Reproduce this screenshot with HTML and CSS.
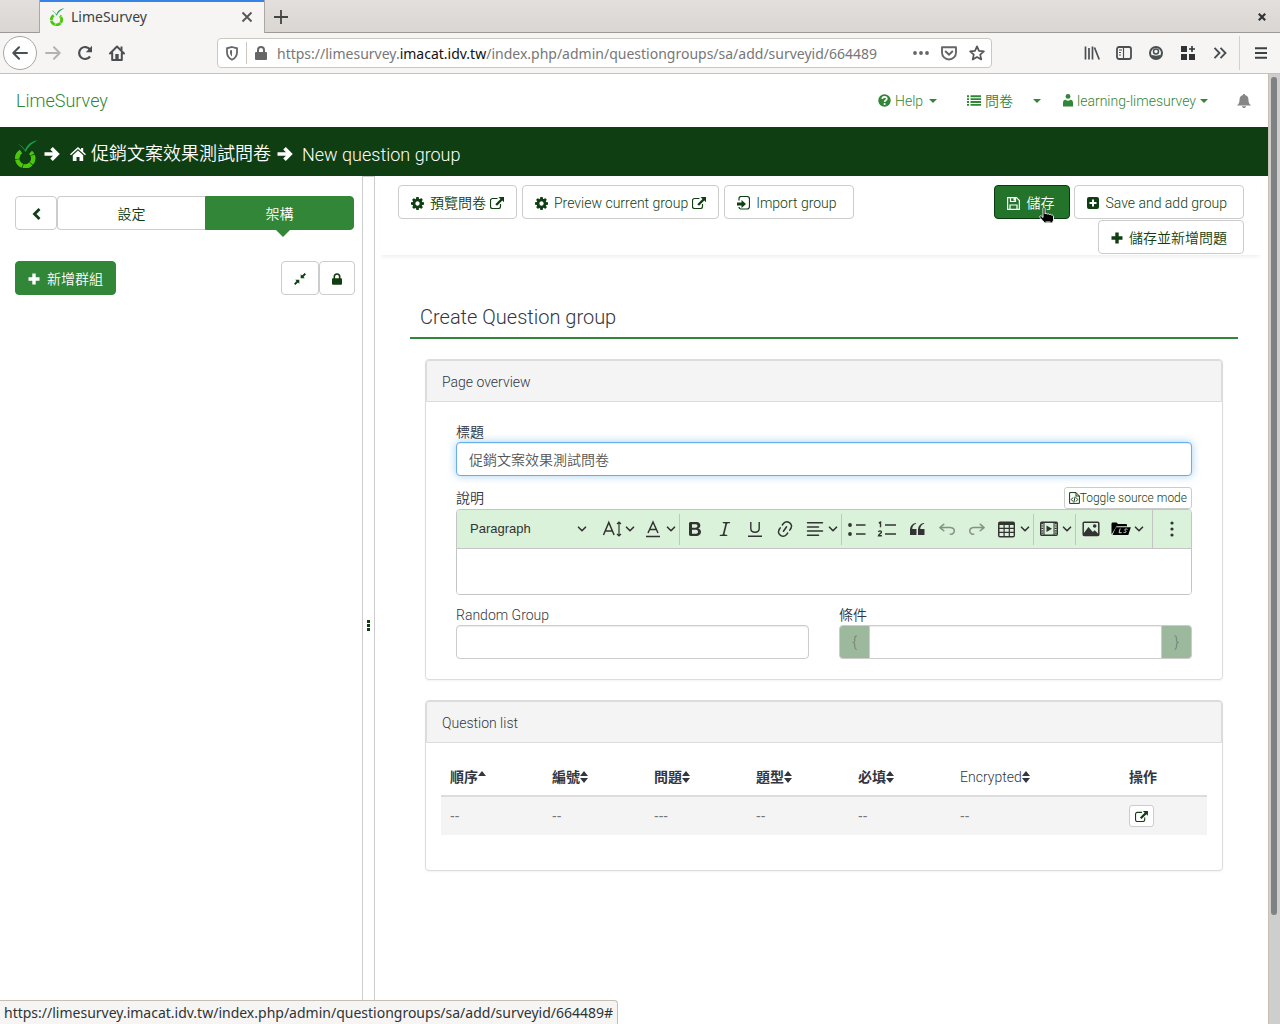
FILE: index.html
```html
<!DOCTYPE html>
<html lang="zh-Hant-TW">
<head>
<meta charset="utf-8">
<meta name="viewport" content="width=device-width, initial-scale=1">
<title>LimeSurvey</title>
<link rel="stylesheet" href="styles.css">
</head>
<body>
<svg class="sprite" aria-hidden="true">
  <symbol id="lime" viewBox="0 0 24 28">
    <path d="M7 11.500a8 8 0 1 0 9.500.8" fill="none" stroke="#4bc80a" stroke-width="4.400" stroke-dasharray="8.500 .700"/>
    <path d="M4 4c3 1 5 3 7 6 2-5 6-9 12.500-9.500C18 3 14 7 11.500 12 9 8 7 6 4 4z" fill="#12a04a"/>
  </symbol>
  <symbol id="caret" viewBox="0 0 8 4"><path d="M0 0h8L4 4z" fill="currentColor"/></symbol>
  <symbol id="arrow" viewBox="0 0 16 16"><path d="M.5 8h12M7.500 2.300L13.200 8l-5.700 5.700" fill="none" stroke="currentColor" stroke-width="3.600"/></symbol>
  <symbol id="home" viewBox="0 0 16 14"><path d="M8 0l3 2.700V1h2.200v3.700L16 7.300l-1 1L8 2 1 8.300l-1-1z" fill="currentColor"/><path d="M8 3.500l5.200 4.700V14H9.500v-4h-3v4H2.800V8.200z" fill="currentColor"/></symbol>
  <symbol id="cog" viewBox="128 128 1536 1536"><path fill="currentColor" d="M1152 896q0-106-75-181t-181-75-181 75-75 181 75 181 181 75 181-75 75-181zm512-109v222q0 12-8 23t-20 13l-185 28q-19 54-39 91 35 50 107 138 10 12 10 25t-9 23q-27 37-99 108t-94 71q-12 0-26-9l-138-108q-44 23-91 38-16 136-29 186-7 28-36 28h-222q-14 0-24.500-8.500t-11.500-21.500l-28-184q-49-16-90-37l-141 107q-10 9-25 9-14 0-25-11-126-114-165-168-7-10-7-23 0-12 8-23 15-21 51-66.500t54-70.500q-27-50-41-99l-183-27q-13-2-21-12.500t-8-23.500v-222q0-12 8-23t19-13l186-28q14-46 39-92-40-57-107-138-10-12-10-24 0-10 9-23 26-36 98.500-107.500t94.500-71.500q13 0 26 10l138 107q44-23 91-38 16-136 29-186 7-28 36-28h222q14 0 24.500 8.500t11.500 21.500l28 184q49 16 90 37l142-107q9-9 24-9 13 0 25 10 129 119 165 170 7 8 7 22 0 12-8 23-15 21-51 66.500t-54 70.500q26 50 41 98l183 28q13 2 21 12.500t8 23.500z"/></symbol>
  <symbol id="external" viewBox="0 0 14 12"><path d="M7.500 1.500H2.500a2 2 0 0 0-2 2v6a2 2 0 0 0 2 2H8.500a2 2 0 0 0 2-2V7" fill="none" stroke="currentColor" stroke-width="1.200"/><path d="M8.500 0H14v5.200l-1.700-1.600L7 8.800 5.300 7.200l5.200-5.300z" fill="currentColor"/></symbol>
  <symbol id="import" viewBox="0 0 13 14"><path d="M2 4.500V2.500a2 2 0 0 1 2-2h6a2.500 2.500 0 0 1 2.500 2.500v7.500a2.500 2.500 0 0 1-2.500 2.500H4a2 2 0 0 1-2-2" fill="none" stroke="currentColor" stroke-width="1.200"/><path d="M0 6.500h4.500V4L9 8l-4.500 4V9.500H0z" fill="currentColor"/></symbol>
  <symbol id="plus" viewBox="0 0 12 12"><path d="M4.300.5h3.400v3.800h3.800v3.400H7.700v3.800H4.300V7.700H.5V4.300h3.800z" fill="currentColor"/></symbol>
  <symbol id="plus-square" viewBox="0 0 12 12"><path fill-rule="evenodd" d="M2 0h8a2 2 0 0 1 2 2v8a2 2 0 0 1-2 2H2a2 2 0 0 1-2-2V2a2 2 0 0 1 2-2zm3 2.500V5H2.500v2H5v2.500h2V7h2.500V5H7V2.500z" fill="currentColor"/></symbol>
  <symbol id="floppy" viewBox="0 0 13 13"><path d="M.6.6H9.500l2.900 2.900v8.900H.6zM3.500.6v3.900h5V.6M3 12V8h7v4" fill="none" stroke="currentColor" stroke-width="1.200"/><path d="M6.500.6h2v3h-2z" fill="currentColor"/></symbol>
  <symbol id="lock" viewBox="0 0 10 12"><path d="M2.300 6V3.700a2.700 2.700 0 0 1 5.400 0V6" fill="none" stroke="currentColor" stroke-width="1.600"/><rect y="5.200" width="10" height="6.500" rx="1" fill="currentColor"/></symbol>
  <symbol id="compress" viewBox="0 0 12 12"><path d="M6.700 5.300V1.200L8 2.500 10.700 0l1.300 1.300-2.500 2.700 1.300 1.300zM5.300 6.700v4.100L4 9.500 1.300 12 0 10.700 2.500 8 1.200 6.700z" fill="currentColor"/></symbol>
  <symbol id="sort" viewBox="0 0 8 12"><path d="M0 5l4-5 4 5zM0 7h8l-4 5z" fill="currentColor"/></symbol>
  <symbol id="sort-up" viewBox="0 0 8 12"><path d="M0 5l4-5 4 5z" fill="currentColor"/></symbol>
  <symbol id="chev" viewBox="0 0 10 10"><path d="M1.500 3.200L5 6.700l3.500-3.500" fill="none" stroke="currentColor" stroke-width="1.600" stroke-linecap="round" stroke-linejoin="round"/></symbol>
</svg>

<div class="browser">
  <div class="tabbar">
    <div class="tab">
      <svg width="16" height="18"><use href="#lime"/></svg>
      <span class="tab-title">LimeSurvey</span>
      <button class="plain" aria-label="Close tab"><svg width="12" height="12" viewBox="0 0 12 12"><path d="M1.500 1.500l9 9m0-9l-9 9" stroke="#555" stroke-width="1.800"/></svg></button>
    </div>
    <button class="plain new-tab" aria-label="New tab"><svg width="14" height="14" viewBox="0 0 14 14"><path d="M7 0v14M0 7h14" stroke="#444" stroke-width="1.800"/></svg></button>
    <button class="plain close-window" aria-label="Close window"><svg width="8" height="8" viewBox="0 0 8 8"><path d="M.8.8l6.400 6.400m0-6.400L.8 7.200" stroke="#2e3436" stroke-width="2.200"/></svg></button>
  </div>
  <div class="urlrow">
    <div class="nav-buttons">
      <button class="plain back" aria-label="Back"><svg width="16" height="14" viewBox="0 0 16 14"><path d="M15 7H1.500M7 1.200L1.300 7 7 12.800" fill="none" stroke="#4a4f52" stroke-width="2" stroke-linecap="round" stroke-linejoin="round"/></svg></button>
      <button class="plain" aria-label="Forward"><svg width="16" height="14" viewBox="0 0 16 14"><path d="M1 7h13.500M9 1.200L14.700 7 9 12.800" fill="none" stroke="#b5b3b1" stroke-width="2" stroke-linecap="round" stroke-linejoin="round"/></svg></button>
      <button class="plain" aria-label="Reload"><svg width="16" height="16" viewBox="0 0 16 16"><path d="M13 4.500A6 6 0 1 0 13 11.500" fill="none" stroke="#4a4f52" stroke-width="2.200"/><path d="M15 .8v6.400H8.800z" fill="#4a4f52"/></svg></button>
      <button class="plain" aria-label="Home"><svg width="16" height="16" viewBox="0 0 16 16"><path d="M1 8.500l7-7 7 7M3.200 8v7h9.600V8" fill="none" stroke="#4a4f52" stroke-width="2" stroke-linejoin="round" stroke-linecap="round"/><path d="M6.300 9h3.400v6H6.300z" fill="#4a4f52"/><path d="M11.500 1.500h2V5h-2z" fill="#4a4f52"/></svg></button>
    </div>
    <div class="address">
      <svg width="12" height="15" viewBox="0 0 12 15"><path d="M6 1l5 1.300v4c0 3.600-1.800 6-5 7.500-3.200-1.500-5-3.900-5-7.500v-4z" fill="none" stroke="#666" stroke-width="1.800"/><path d="M6 4v6.500C4.500 9 4 8 4 6V4.500z" fill="#666"/></svg>
      <span class="address-rule"></span>
      <svg width="12" height="14" viewBox="0 0 12 14"><path d="M3 7V4a3 3 0 0 1 6 0v3" fill="none" stroke="#666" stroke-width="2"/><rect y="6" width="12" height="8" rx="1" fill="#666"/></svg>
      <span class="url">https://limesurvey.<b>imacat.idv.tw</b>/index.php/admin/questiongroups/sa/add/surveyid/664489</span>
      <svg width="16" height="4" viewBox="0 0 16 4"><circle cx="2" cy="2" r="1.900" fill="#666"/><circle cx="8" cy="2" r="1.900" fill="#666"/><circle cx="14" cy="2" r="1.900" fill="#666"/></svg>
      <svg width="16" height="15" viewBox="0 0 16 15"><path d="M1 1.200h14v5.300a7 7 0 0 1-14 0z" fill="none" stroke="#666" stroke-width="1.900" stroke-linejoin="round"/><path d="M4.700 5.500L8 8.700l3.300-3.200" fill="none" stroke="#666" stroke-width="2" stroke-linecap="round"/></svg>
      <svg width="16" height="16" viewBox="0 0 16 16"><path d="M8 1.300l2 4.500 4.900.5-3.700 3.300 1.100 4.900L8 12l-4.300 2.500 1.100-4.900L1.100 6.300 6 5.800z" fill="none" stroke="#555" stroke-width="1.700" stroke-linejoin="round"/></svg>
    </div>
    <div class="tools">
      <svg width="16" height="16" viewBox="0 0 16 16"><path d="M1.500 1.500v13M5 3v11.500M8.500 1.500v13M10.500 2.500l4.700 12" fill="none" stroke="#4a4f52" stroke-width="1.700"/></svg>
      <svg width="16" height="14" viewBox="0 0 16 14"><rect x="1" y="1" width="14" height="12" rx="2" fill="none" stroke="#4a4f52" stroke-width="1.800"/><path d="M7.500 1v12M3 4h3M3 6.500h2M3 9h2" stroke="#4a4f52" stroke-width="1.200"/></svg>
      <svg width="16" height="14" viewBox="0 0 14 14"><circle cx="7" cy="7" r="6" fill="none" stroke="#4a4f52" stroke-width="2"/><circle cx="7" cy="5.500" r="2.500" fill="none" stroke="#4a4f52" stroke-width="1.500"/><path d="M2 8.500c2.500 1.500 7.500 1.500 10 0l-2 4H4z" fill="#4a4f52"/></svg>
      <svg width="16" height="14" viewBox="0 0 14 14"><path d="M0 0h6v6H0zM0 8h6v6H0zM8 8h6v6H8zM10.200 0h1.600v2.200H14v1.600h-2.200V6h-1.600V3.800H8V2.200h2.200z" fill="#2f3335"/></svg>
      <svg width="16" height="12" viewBox="0 0 13 12"><path d="M1 .8L6 6l-5 5.200M7 .8L12 6l-5 5.200" fill="none" stroke="#4a4f52" stroke-width="1.900"/></svg>
    </div>
    <button class="plain menu" aria-label="Menu"><svg width="12" height="12" viewBox="0 0 12 12"><path d="M0 1.200h12M0 6h12M0 10.800h12" stroke="#3c4143" stroke-width="1.900"/></svg></button>
  </div>

  <div class="viewport">
    <div class="page">
      <header class="topnav">
        <a class="brand" href="#">LimeSurvey</a>
        <nav class="links">
          <a href="#"><svg width="13" height="13" viewBox="0 0 13 13"><circle cx="6.500" cy="6.500" r="6.200" fill="currentColor"/><path d="M4.300 5c0-3 4.500-2.800 4.500-.3 0 1.600-2.200 1.600-2.200 3.300M6.600 9v2" fill="none" stroke="#fff" stroke-width="1.700"/></svg>Help<svg class="caret" width="8" height="4"><use href="#caret"/></svg></a>
          <a href="#" class="surveys zh"><svg width="14" height="11" viewBox="0 0 14 11"><path d="M0 1.200h2M0 4.100h2M0 7h2M0 9.900h2M3.500 1.200H14M3.500 4.100H14M3.500 7H14M3.500 9.900H14" stroke="currentColor" stroke-width="1.900"/></svg>問卷</a>
          <a href="#" class="surveys-more" aria-label="More"><svg width="8" height="4"><use href="#caret"/></svg></a>
          <a href="#" class="user"><svg width="10" height="13" viewBox="0 0 10 13"><circle cx="5" cy="2.400" r="2.400" fill="currentColor"/><path d="M0 12.500V9c0-2 1-3.200 2.500-3.200a4 4 0 0 0 5 0C9 5.800 10 7 10 9v3.500z" fill="currentColor"/></svg>learning-limesurvey<svg width="8" height="4"><use href="#caret"/></svg></a>
          <a href="#" class="bell" aria-label="Notifications"><svg width="14" height="14" viewBox="0 0 14 14"><path d="M7 0c.8 0 1 .5 1 1 2.500.6 3.500 2.300 3.500 5 0 2.500.8 4 2.500 5.500H0C1.700 10 2.500 8.500 2.500 6c0-2.700 1-4.400 3.500-5 0-.5.200-1 1-1zM5 12.200h4c0 2.400-4 2.400-4 0z" fill="currentColor"/></svg></a>
        </nav>
      </header>

      <div class="crumbs">
        <svg width="24" height="28"><use href="#lime"/></svg>
        <svg width="16" height="16"><use href="#arrow"/></svg>
        <a href="#" class="survey-link zh"><svg width="16" height="14"><use href="#home"/></svg>促銷文案效果測試問卷</a>
        <svg width="16" height="16"><use href="#arrow"/></svg>
        <span>New question group</span>
      </div>

      <div class="columns">
        <aside class="sidebar">
          <div class="side-tabs">
            <button class="btn collapse" aria-label="Collapse"><svg width="9" height="12" viewBox="0 0 9 12"><path d="M7.500 1L2.500 6l5 5" fill="none" stroke="currentColor" stroke-width="2.800"/></svg></button>
            <button class="btn settings zh">設定</button>
            <button class="btn structure zh">架構</button>
          </div>
          <div class="side-actions">
            <button class="btn primary zh"><svg width="12" height="12"><use href="#plus"/></svg>新增群組</button>
            <div class="pair">
              <button class="btn" aria-label="Collapse all"><svg width="12" height="12"><use href="#compress"/></svg></button>
              <button class="btn" aria-label="Lock"><svg width="10" height="12"><use href="#lock"/></svg></button>
            </div>
          </div>
        </aside>
        <div class="splitter"><i></i><i></i><i></i></div>

        <main class="main">
          <div class="actions">
            <div class="left">
              <button class="btn zh"><svg width="13" height="13"><use href="#cog"/></svg>預覽問卷<svg class="ext" width="14" height="12"><use href="#external"/></svg></button>
              <button class="btn"><svg width="13" height="13"><use href="#cog"/></svg>Preview current group<svg class="ext" width="14" height="12"><use href="#external"/></svg></button>
              <button class="btn wide"><svg width="13" height="14"><use href="#import"/></svg>Import group</button>
            </div>
            <div class="right">
              <div class="save-wrap">
                <button class="btn save zh"><svg width="13" height="13"><use href="#floppy"/></svg>儲存</button>
                <svg class="cursor" width="16" height="18" viewBox="0 0 16 18"><path d="M4 1.500c0-1.300 2-1.300 2 0V7c.5-.8 2-.6 2.200.2.600-.7 1.800-.5 2.100.4.700-.6 1.900-.2 2.200.6.900-.3 2 .2 2 1.300v3.200c0 1.500-1.500 2.500-1.500 3.300H5.500c0-1-3.700-4-4.700-5.800-.7-1.200 1-1.700 1.900-.9L4 10.500z" fill="#000" stroke="#fff" stroke-width=".9"/><path d="M6.500 15h5" stroke="#fff" stroke-width="1"/></svg>
              </div>
              <button class="btn wide"><svg width="12" height="12"><use href="#plus-square"/></svg>Save and add group</button>
              <button class="btn wide zh"><svg width="12" height="12"><use href="#plus"/></svg>儲存並新增問題</button>
            </div>
          </div>

          <form class="content" onsubmit="return false">
            <h1>Create Question group</h1>

            <section class="panel">
              <h2>Page overview</h2>
              <div class="panel-body form">
                <label class="zh" for="title">標題</label>
                <input id="title" class="field focused zh" type="text" value="促銷文案效果測試問卷">

                <div class="desc-row">
                  <label class="zh" for="description">說明</label>
                  <button class="btn mini" type="button"><svg width="11" height="12" viewBox="0 0 11 12"><path d="M.6.6h6.400l3.400 3.400v7.400H.6zM7 .6V4h3.400" fill="none" stroke="currentColor"/><path d="M4 5.500L2.300 7.500 4 9.500M7 5.500l1.700 2L7 9.500M6.200 4.500l-1.400 6" fill="none" stroke="currentColor"/></svg>Toggle source mode</button>
                </div>
                <div class="editor">
                  <div class="toolbar">
                    <div class="style-pick">
                      <select aria-label="Heading"><option>Paragraph</option></select>
                      <svg width="10" height="10"><use href="#chev"/></svg>
                    </div>
                    <button type="button" class="tool drop" aria-label="Font size"><svg width="20" height="20" viewBox="0 0 20 20"><path d="M1.500 16L6.800 3.500 12.100 16M3.500 12h6.600" fill="none" stroke="currentColor" stroke-width="1.500"/><path d="M17 3.500v13M15 5l2-2 2 2M15 15l2 2 2-2" fill="none" stroke="currentColor" stroke-width="1.200"/></svg><svg width="10" height="10"><use href="#chev"/></svg></button>
                    <button type="button" class="tool drop" aria-label="Font color"><svg width="20" height="20" viewBox="0 0 20 20"><path d="M5 14l5-11 5 11M6.700 10.500h6.600" fill="none" stroke="currentColor" stroke-width="1.500"/><path d="M3 17.500h14" stroke="currentColor" stroke-width="1.500"/></svg><svg width="10" height="10"><use href="#chev"/></svg></button>
                    <span class="sep"></span>
                    <button type="button" class="tool" aria-label="Bold"><svg width="20" height="20" viewBox="0 0 20 20"><path fill="currentColor" d="M10.187 17H5.773c-.637 0-1.092-.138-1.364-.415-.273-.277-.409-.718-.409-1.323V4.738c0-.617.14-1.062.419-1.332.279-.27.73-.406 1.354-.406h4.680c.69 0 1.288.041 1.793.124.506.083.96.242 1.360.478.341.197.644.447.906.75a3.262 3.262 0 0 1 .808 2.162c0 1.401-.722 2.426-2.167 3.075C15.050 10.175 16 11.315 16 13.010a3.756 3.756 0 0 1-2.296 3.504 6.100 6.100 0 0 1-1.517.377c-.571.073-1.238.11-2 .11zm-.217-6.217H7v4.087h3.069c1.977 0 2.965-.69 2.965-2.072 0-.707-.256-1.220-.768-1.537-.512-.319-1.277-.478-2.296-.478zM7 5.130v3.619h2.606c.729 0 1.292-.067 1.690-.2a1.600 1.600 0 0 0 .91-.765c.165-.267.247-.566.247-.897 0-.707-.26-1.176-.778-1.409-.519-.232-1.310-.348-2.375-.348H7z"/></svg></button>
                    <button type="button" class="tool" aria-label="Italic"><svg width="20" height="20" viewBox="0 0 20 20"><path fill="currentColor" d="m9.586 14.633.021.004c-.036.335.095.655.393.962.082.083.173.15.274.201h1.474a.6.6 0 1 1 0 1.200H5.304a.6.6 0 0 1 0-1.200h1.150c.474-.07.809-.182 1.005-.334.157-.122.291-.32.404-.597l2.416-9.550a1.053 1.053 0 0 0-.281-.823 1.120 1.120 0 0 0-.442-.296H8.150a.6.6 0 0 1 0-1.200h6.443a.6.6 0 1 1 0 1.200h-1.195c-.376.056-.65.155-.823.296-.215.175-.423.439-.623.79l-2.366 9.347z"/></svg></button>
                    <button type="button" class="tool" aria-label="Underline"><svg width="20" height="20" viewBox="0 0 20 20"><path d="M5.800 3v6.500c0 5 8.400 5 8.400 0V3M3 17.300h14" fill="none" stroke="currentColor" stroke-width="1.400"/></svg></button>
                    <button type="button" class="tool" aria-label="Link"><svg width="20" height="20" viewBox="0 0 20 20"><path fill="currentColor" d="m11.077 15 .991-1.416a.75.75 0 1 1 1.229.86l-1.148 1.640a.748.748 0 0 1-.217.206 5.251 5.251 0 0 1-8.503-5.955.741.741 0 0 1 .12-.274l1.147-1.639a.75.75 0 1 1 1.228.86L4.933 10.700l.006.003a3.750 3.750 0 0 0 6.132 4.294l.006.004zm5.494-5.335a.748.748 0 0 1-.12.274l-1.147 1.639a.75.75 0 1 1-1.228-.86l.86-1.230a3.750 3.750 0 0 0-6.144-4.301l-.86 1.229a.75.75 0 0 1-1.229-.86l1.148-1.640a.748.748 0 0 1 .217-.206 5.251 5.251 0 0 1 8.503 5.955zm-4.563-2.532a.75.75 0 0 1 .184 1.045l-3.155 4.505a.75.75 0 1 1-1.229-.86l3.155-4.506a.75.75 0 0 1 1.045-.184z"/></svg></button>
                    <button type="button" class="tool drop" aria-label="Alignment"><svg width="20" height="20" viewBox="0 0 20 20"><path d="M2.500 3.700h15M2.500 7.900h11M2.500 12.100h15M2.500 16.300h11" stroke="currentColor" stroke-width="1.500" stroke-linecap="round"/></svg><svg width="10" height="10"><use href="#chev"/></svg></button>
                    <span class="sep"></span>
                    <button type="button" class="tool" aria-label="Bulleted list"><svg width="20" height="20" viewBox="0 0 20 20"><path d="M9 6h9.500M9 15h9.500" stroke="currentColor" stroke-width="1.500"/><circle cx="3" cy="6" r="1.900" fill="currentColor"/><circle cx="3" cy="15" r="1.900" fill="currentColor"/></svg></button>
                    <button type="button" class="tool" aria-label="Numbered list"><svg width="20" height="20" viewBox="0 0 20 20"><path d="M8 6h11M8 15h11" stroke="currentColor" stroke-width="1.500"/><path d="M1.800 4l1.700-.8v5M1.500 13c.3-1.600 3.200-1.400 2.900.2-.2 1.100-2.600 2.200-2.900 3.600h3.400" fill="none" stroke="currentColor" stroke-width="1.400"/></svg></button>
                    <button type="button" class="tool" aria-label="Block quote"><svg width="20" height="20" viewBox="0 0 20 20"><path fill="currentColor" d="M3 10.423a6.500 6.500 0 0 1 6.056-6.408l.038.67C6.448 5.423 5.354 7.663 5.220 10H9c.552 0 .5.432.5.986v4.511c0 .554-.448.503-1 .503h-5c-.552 0-.5-.449-.5-1.003v-4.574zm8 0a6.500 6.500 0 0 1 6.056-6.408l.038.67c-2.646.739-3.740 2.979-3.873 5.315H17c.552 0 .5.432.5.986v4.511c0 .554-.448.503-1 .503h-5c-.552 0-.5-.449-.5-1.003v-4.574z"/></svg></button>
                    <button type="button" class="tool off" aria-label="Undo" disabled><svg width="20" height="20" viewBox="0 0 20 20"><path id="undo" fill="currentColor" d="m5.042 9.367 2.189 1.837a.75.75 0 0 1-.965 1.149l-3.788-3.180a.747.747 0 0 1-.21-.284.75.75 0 0 1 .17-.945L6.230 4.762a.75.75 0 1 1 .964 1.150L4.863 7.866h8.917A.75.75 0 0 1 14 7.900a4 4 0 1 1-1.477 7.718l.344-1.489a2.500 2.500 0 1 0 1.094-4.730l.008-.032H5.042z"/></svg></button>
                    <button type="button" class="tool off" aria-label="Redo" disabled><svg width="20" height="20" viewBox="0 0 20 20"><g transform="matrix(-1 0 0 1 20 0)"><use href="#undo"/></g></svg></button>
                    <button type="button" class="tool drop" aria-label="Insert table"><svg width="20" height="20" viewBox="0 0 20 20"><path fill="currentColor" fill-rule="evenodd" d="M3 2.500h13a2 2 0 0 1 2 2v12a2 2 0 0 1-2 2H3a2 2 0 0 1-2-2v-12a2 2 0 0 1 2-2zM2.500 6v2.800h4V6zm5.200 0v2.800h4V6zm5.200 0v2.800h3.700V6zM2.500 10v2.800h4V10zm5.200 0v2.800h4V10zm5.200 0v2.800h3.700V10zM2.500 14v3h4v-3zm5.200 0v3h4v-3zm5.200 0v3h3.700v-3z"/></svg><svg width="10" height="10"><use href="#chev"/></svg></button>
                    <span class="sep"></span>
                    <button type="button" class="tool drop" aria-label="Insert media"><svg width="20" height="20" viewBox="0 0 20 20"><rect x="1.700" y="3.200" width="16.600" height="13.100" rx="1" fill="none" stroke="currentColor" stroke-width="1.400"/><path d="M5 4v12M15 4v12" stroke="currentColor"/><path d="M3.300 4v12M16.700 4v12" stroke="currentColor" stroke-width="2" stroke-dasharray="1.200 1.200"/><path d="M7.500 6.500L13 9.800l-5.500 3.300z" fill="currentColor"/></svg><svg width="10" height="10"><use href="#chev"/></svg></button>
                    <span class="sep"></span>
                    <button type="button" class="tool" aria-label="Insert image"><svg width="20" height="20" viewBox="0 0 20 20"><rect x="2.200" y="3.200" width="15.600" height="13.200" rx="1" fill="none" stroke="currentColor" stroke-width="1.500"/><path d="M2.500 14.500L7.500 8l4.300 5 1.800-1.700 4 3.700v1.500h-15z" fill="currentColor"/><circle cx="13.700" cy="7" r="1.800" fill="currentColor"/></svg></button>
                    <button type="button" class="tool drop" aria-label="Files"><svg width="20" height="20" viewBox="0 0 20 20"><path d="M.5 15.500V5c0-1 .5-1.500 1.500-1.500h3.500L7 5h7.500c1 0 1.500.5 1.500 1.300v1H5.500z" fill="#000"/><path d="M5 8.300h14.800L17.300 16H1.500z" fill="#000"/><path d="M9.200 9.500L8 13.700h2.800M16.500 10.300c-3-1-3.500 1-2 1.600s.5 2.200-2 1.400" fill="none" stroke="#daf1da" stroke-width=".9"/></svg><svg width="10" height="10"><use href="#chev"/></svg></button>
                    <button type="button" class="tool more" aria-label="More"><svg width="20" height="20" viewBox="0 0 20 20"><g fill="currentColor"><circle cx="10" cy="4" r="1.600"/><circle cx="10" cy="10" r="1.600"/><circle cx="10" cy="16" r="1.600"/></g></svg></button>
                  </div>
                  <textarea id="description" rows="1"></textarea>
                </div>

                <div class="two">
                  <div>
                    <label for="random">Random Group</label>
                    <input id="random" class="field" type="text">
                  </div>
                  <div>
                    <label class="zh" for="cond">條件</label>
                    <div class="addon-group"><span>{</span><input id="cond" class="field" type="text"><span>}</span></div>
                  </div>
                </div>
              </div>
            </section>

            <section class="panel">
              <h2>Question list</h2>
              <div class="panel-body list">
                <table>
                  <colgroup><col class="c"><col class="c"><col class="c"><col class="c"><col class="c"><col class="enc"><col></colgroup>
                  <thead><tr>
                    <th>順序<svg width="8" height="12"><use href="#sort-up"/></svg></th>
                    <th>編號<svg width="8" height="12"><use href="#sort"/></svg></th>
                    <th>問題<svg width="8" height="12"><use href="#sort"/></svg></th>
                    <th>題型<svg width="8" height="12"><use href="#sort"/></svg></th>
                    <th>必填<svg width="8" height="12"><use href="#sort"/></svg></th>
                    <th class="light">Encrypted<svg width="8" height="12"><use href="#sort"/></svg></th>
                    <th>操作</th>
                  </tr></thead>
                  <tbody><tr>
                    <td>--</td><td>--</td><td>---</td><td>--</td><td>--</td><td>--</td>
                    <td><button type="button" class="btn open" aria-label="Open"><svg width="13" height="11"><use href="#external"/></svg></button></td>
                  </tr></tbody>
                </table>
              </div>
            </section>
          </form>
        </main>
      </div>
    </div>
    <div class="scrollbar"><div class="thumb"></div></div>
  </div>
  <div class="status">https://limesurvey.imacat.idv.tw/index.php/admin/questiongroups/sa/add/surveyid/664489#</div>
</div>
</body>
</html>
```
FILE: styles.css
```css
* { box-sizing: border-box; }
body {
  margin: 0;
  font: 300 14px/20px Roboto, "Noto Sans CJK TC", sans-serif;
  color: #333641;
  background: #fff;
}
.zh { font-weight: 350; }
a { color: inherit; text-decoration: none; }
button, input, select, textarea { font: inherit; color: inherit; margin: 0; }
.btn.zh, .field.zh { font-weight: 350; }
button { cursor: pointer; }
svg { flex: none; display: block; }
.sprite { position: absolute; width: 0; height: 0; }
.plain { border: 0; padding: 0; background: none; display: grid; place-items: center; }

/* browser window */
.browser { min-height: 100vh; display: flex; flex-direction: column; }
.tabbar {
  display: flex;
  align-items: center;
  height: 33px;
  padding: 0 14px 0 39px;
  background: linear-gradient(#e2dfdc, #dad6d2);
  box-shadow: inset 0 -1px #9c9996;
}
.tab {
  display: flex;
  align-items: center;
  gap: 6px;
  width: 226px;
  height: 33px;
  padding: 0 11px 0 9px;
  background: #f6f5f4;
  border: solid #aaa7a4;
  border-width: 0 1px;
  box-shadow: inset 0 2px #3584e4;
  font: 400 14px/20px "Noto Sans", sans-serif;
  color: #3c4143;
}
.tab-title { flex: 1; }
.new-tab { margin-left: 9px; }
.close-window { margin-left: auto; }
.urlrow {
  display: flex;
  align-items: center;
  height: 41px;
  padding: 0 13px 0 3px;
  background: #f6f5f4;
  border-bottom: 1px solid #c5c1bd;
}
.nav-buttons { display: flex; align-items: center; gap: 16px; }
.nav-buttons .back {
  width: 34px;
  height: 34px;
  margin-right: -8px;
  border: 1px solid #a9a7a5;
  border-radius: 50%;
  background: #fff;
}
.address {
  display: flex;
  align-items: center;
  gap: 12px;
  flex: 1;
  height: 30px;
  margin: 0 92px;
  padding: 0 6px 0 8px;
  border: 1px solid #cdc7c2;
  border-radius: 4px;
  background: #fff;
}
.address-rule { width: 1px; height: 22px; background: #cdc7c2; margin: 0 -4px; }
.url { flex: 1; margin: 0 -4px 0 -2px; padding-top: 2px; white-space: nowrap; font: 400 14px/20px "Noto Sans", sans-serif; color: #777; }
.url b { font-weight: 400; color: #111; }
.tools { display: flex; align-items: center; gap: 16px; }
.menu { margin-left: 11px; padding-left: 15px; height: 34px; border-left: 1px solid #d5d0cc; }
.viewport { flex: 1; display: flex; }
.page { flex: 1; display: flex; flex-direction: column; min-width: 0; }
.scrollbar { display: flex; width: 12px; padding: 3px 3px 0 2px; background: #cecece; border-left: 1px solid #c9c0b4; }
.thumb { flex: 1; margin-bottom: 109px; border-radius: 3px; background: #7e8282; }
.status {
  position: fixed;
  left: 0;
  bottom: 0;
  height: 24px;
  padding: 1px 4px;
  border: solid #c5beb4;
  border-width: 1px 1px 0 0;
  border-radius: 0 4px 0 0;
  background: #f6f5f4;
  font: 400 14px/22px "Noto Sans", sans-serif;
  color: #2e3436;
}

/* top navigation */
.topnav {
  display: flex;
  align-items: center;
  justify-content: space-between;
  height: 53px;
  padding: 0 17px 0 16px;
  color: #328637;
}
.brand { font-size: 18px; }
.links, .links a { display: flex; align-items: center; }
.links a { gap: 4px; }
.links .caret { margin-left: 2px; }
.links .surveys { margin-left: 30px; }
.links .surveys-more { margin-left: 20px; }
.links .user { margin-left: 22px; }
.links .bell { margin-left: 29px; color: #868686; }

.crumbs {
  display: flex;
  align-items: center;
  gap: 6px;
  height: 49px;
  padding: 4px 14px 0;
  background: #103e13;
  color: #fff;
  font-size: 18px;
}
.survey-link { display: flex; align-items: center; gap: 5px; margin-left: 4px; }
.crumbs > span { margin-left: 3px; padding-top: 2px; }

/* buttons */
.btn {
  display: inline-flex;
  align-items: center;
  justify-content: center;
  gap: 6px;
  height: 34px;
  padding: 2px 12px 0;
  border: 1px solid #ccc;
  border-radius: 4px;
  background: #fff;
  color: #103e13;
  white-space: nowrap;
}
.btn .ext { margin-left: -2px; }
.btn.wide { padding-right: 16px; }
.btn.primary { background: #328637; border-color: #328637; color: #fff; }
.btn.save { background: #23742a; border-color: #0c3b10; color: #fff; padding-right: 15px; }

/* side bar */
.columns { flex: 1; display: flex; }
.sidebar { flex: 0 0 362px; padding: 20px 7px 0 15px; }
.side-tabs { display: flex; }
.collapse { width: 42px; }
.settings { flex: 1; border-right: 0; border-radius: 4px 0 0 4px; }
.structure {
  position: relative;
  flex: 1;
  margin-right: 1px;
  border-color: #328637;
  border-radius: 0 4px 4px 0;
  background: #328637;
  color: #fff;
}
.structure::after {
  content: "";
  position: absolute;
  top: 100%;
  left: 50%;
  margin-left: -5px;
  border: 8px solid transparent;
  border-top-color: #328637;
  border-bottom: 0;
}
.side-actions { display: flex; justify-content: space-between; margin-top: 31px; }
.side-actions .primary { gap: 7px; }
.pair { display: flex; }
.splitter {
  flex: 0 0 13px;
  display: flex;
  flex-direction: column;
  align-items: center;
  justify-content: center;
  gap: 1px;
  padding-top: 50px;
  border: 1px solid #ccc;
  border-bottom: 0;
}
.splitter i { width: 3px; height: 3px; background: #103e13; }

/* main column */
.main { flex: 1; min-width: 0; padding: 0 7px 0 5px; }
.actions {
  display: flex;
  align-items: flex-start;
  justify-content: space-between;
  padding: 9px 17px 1px 18px;
  box-shadow: 0 4px 4px -2px #eee;
}
.left { display: flex; gap: 5px; }
.right { display: flex; flex-wrap: wrap; justify-content: flex-end; gap: 1px 4px; flex: 0 1 260px; }
.save-wrap { position: relative; }
.cursor { position: absolute; left: 45px; top: 22px; }
.content { padding: 47px 23px 0 30px; }
h1 {
  margin: 0 0 20px;
  padding: 3px 10px 8px;
  border-bottom: 2px solid #328637;
  font-size: 20px;
  line-height: 24px;
  font-weight: 300;
}
.panel {
  margin: 0 15px 20px;
  border: 1px solid #dcdcdc;
  border-radius: 4px;
  box-shadow: 0 1px 2px #0000000d;
}
h2 {
  margin: 0;
  padding: 11px 15px 9px;
  border: 1px solid #dcdcdc;
  border-radius: 3px 3px 0 0;
  background: #f4f4f4;
  font-size: 14px;
  line-height: 20px;
  font-weight: 300;
}
.form { padding: 20px 30px; }
.form label { display: block; line-height: 20px; }
.field {
  display: block;
  width: 100%;
  height: 34px;
  padding: 0 12px;
  border: 1px solid #ccc;
  border-radius: 4px;
  outline: 0;
  background: #fff;
  color: #555;
  box-shadow: inset 0 1px 1px #00000013;
}
.focused { border-color: #66afe9; box-shadow: inset 0 1px 1px #00000013, 0 0 8px #66afe999; }
.desc-row { display: flex; align-items: center; justify-content: space-between; margin-top: 11px; }
.btn.mini { height: 22px; padding: 0 4px; gap: 0; border-radius: 3px; font-size: 12px; }
.editor { border: 1px solid #c4c4c4; border-radius: 4px; overflow: hidden; }
.toolbar {
  display: flex;
  align-items: center;
  height: 39px;
  background: #daf1da;
  border-bottom: 1px solid #c4c4c4;
  color: #333;
}
.style-pick { display: flex; align-items: center; flex: 1 1 139px; min-width: 0; }
.style-pick select {
  flex: 1;
  min-width: 0;
  height: 30px;
  margin-right: -19px;
  padding: 0 19px 0 13px;
  border: 0;
  appearance: none;
  background: none;
  font: 400 13px/20px "Liberation Sans", sans-serif;
}
.style-pick svg { margin-right: 10px; pointer-events: none; }
.tool { flex: none; display: flex; align-items: center; width: 30px; height: 30px; padding: 0 5px; border: 0; background: none; }
.tool.drop { width: 41px; padding-right: 3px; gap: 3px; }
.tool.off { opacity: .5; color: #333; }
.tool.more { width: 39px; height: 38px; margin-left: 5px; padding-left: 9px; border-left: 1px solid #c4c4c4; }
.sep { width: 1px; height: 31px; background: #c4c4c4; }
.editor textarea { display: block; width: 100%; height: 45px; padding: 12px; border: 0; outline: 0; resize: none; }
.two { display: grid; grid-template-columns: 1fr 1fr; gap: 30px; margin-top: 10px; }
.addon-group { display: flex; }
.addon-group span {
  flex: 0 0 31px;
  display: grid;
  place-items: center;
  border: 1px solid #ccc;
  border-radius: 4px 0 0 4px;
  background: #9cb99e;
  color: #6d7a6e;
}
.addon-group span:last-child { border-radius: 0 4px 4px 0; }
.addon-group .field { flex: 1; min-width: 0; border-radius: 0; border-width: 1px 0; }

/* question table */
.list { padding: 15px 15px 35px; }
table { width: 100%; table-layout: fixed; border-collapse: collapse; }
.c { width: 102px; }
.enc { width: 169px; }
th, td { padding: 8px 8px 8px 9px; text-align: left; }
th { height: 38px; border-bottom: 2px solid #dcdcdc; font-weight: 700; line-height: 20px; }
th svg { display: inline-block; vertical-align: -1px; }
th.light { font-weight: 300; }
td { height: 39px; padding: 0 8px 0 9px; background: #f4f4f4; font-family: "Liberation Sans", sans-serif; color: #777; }
.btn.open { width: 25px; height: 22px; padding: 0; border-radius: 3px; vertical-align: middle; }
```
